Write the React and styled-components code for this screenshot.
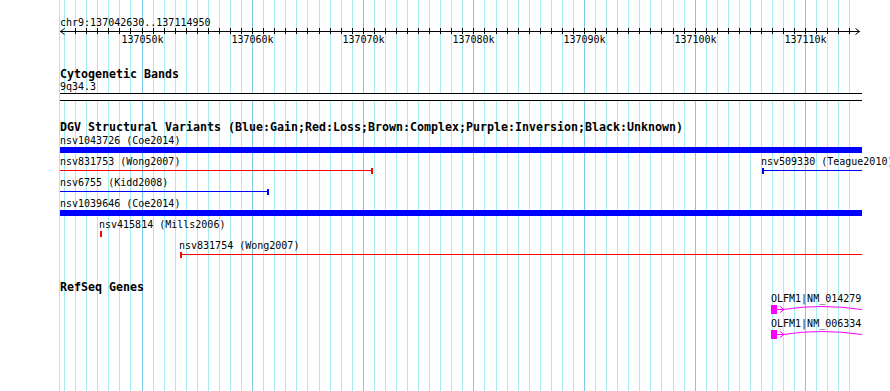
import React from 'react';
import styled, { createGlobalStyle } from 'styled-components';

// region shown in the browser panel
const START = 137042630;
const END = 137114950;
const LEFT = 60;
const SPAN = 800;
const toX = bp => LEFT + ((bp - START) * SPAN) / (END - START);

const BLUE = '#0000ff';
const RED = '#ff0000';
const MAGENTA = '#ff00ff';

const GlobalStyle = createGlobalStyle`
    html, body {
        margin: 0;
        padding: 0;
        background: #ffffff;
    }
    body {
        font-family: "DejaVu Sans Mono", "Liberation Mono", monospace;
        color: #000;
    }
`;

const Panel = styled.div`
    position: relative;
    width: 890px;
    height: 391px;
    overflow: hidden;
    background: #ffffff;
`;

const GridLayer = styled.svg`
    position: absolute;
    left: 0;
    top: 0;
    display: block;
`;

const Tracks = styled.div`
    position: relative;
    display: flex;
    flex-direction: column;
`;

const CoordLine = styled.div`
    margin-top: 17px;
    height: 11px;
    padding-left: ${LEFT}px;
    font-size: 10px;
    line-height: 12px;
    white-space: nowrap;
`;

const RulerSvg = styled.svg`
    display: block;
`;

const RulerLabels = styled.div`
    position: relative;
    margin-top: -2px;
    height: 12px;
`;

const RulerLabel = styled.span`
    position: absolute;
    top: 0;
    transform: translateX(-50%);
    font-size: 10px;
    line-height: 12px;
    white-space: nowrap;
`;

const TrackTitle = styled.div`
    margin-top: ${p => p.$gap}px;
    height: ${p => p.$h}px;
    padding-left: ${LEFT}px;
    font-size: 11.63px;
    font-weight: bold;
    line-height: 13px;
    white-space: nowrap;
`;

const SubLabel = styled.div`
    height: 12px;
    padding-left: ${LEFT}px;
    font-size: 10px;
    line-height: 12px;
`;

const BandBox = styled.div`
    margin-left: ${LEFT}px;
    width: 802px;
    height: 8px;
    box-sizing: border-box;
    border-top: 1px solid #000;
    border-bottom: 1px solid #000;
    background: #fff;
`;

const FeatureRow = styled.div`
    position: relative;
    height: ${p => p.$h}px;
`;

const FeatureLabel = styled.span`
    position: absolute;
    top: 0;
    font-size: 10px;
    line-height: 12px;
    white-space: nowrap;
`;

const Bar = styled.div`
    position: absolute;
    top: 12px;
    height: 6px;
    background: ${p => p.$color};
`;

const Span = styled.div`
    position: absolute;
    top: 14px;
    height: 1px;
    background: ${p => p.$color};
`;

const Tick = styled.div`
    position: absolute;
    top: 12px;
    width: 2px;
    height: 6px;
    background: ${p => p.$color};
`;

const GeneSvg = styled.svg`
    position: absolute;
    top: 12px;
    display: block;
    overflow: visible;
`;

const gridLines = [{ x: 59, major: false }];
for (let k = 137043; k <= 137114; k++) {
    gridLines.push({ x: Math.round(toX(k * 1000)), major: k % 10 === 0 });
}

const rulerLabels = [];
for (let k = 137050; k <= 137110; k += 10) {
    rulerLabels.push({ x: Math.round(toX(k * 1000)), text: `${k}k` });
}

const variantRows = [
    [{ label: 'nsv1043726 (Coe2014)', at: 60, kind: 'bar', from: 60, to: 862, color: BLUE }],
    [
        { label: 'nsv831753 (Wong2007)', at: 60, kind: 'line', from: 60, to: 373, tick: 371, color: RED },
        { label: 'nsv509330 (Teague2010)', at: 761, kind: 'line', from: 762, to: 862, tick: 762, color: BLUE },
    ],
    [{ label: 'nsv6755 (Kidd2008)', at: 60, kind: 'line', from: 60, to: 269, tick: 267, color: BLUE }],
    [{ label: 'nsv1039646 (Coe2014)', at: 60, kind: 'bar', from: 60, to: 862, color: BLUE }],
    [{ label: 'nsv415814 (Mills2006)', at: 99, kind: 'point', tick: 100, color: RED }],
    [{ label: 'nsv831754 (Wong2007)', at: 179, kind: 'line', from: 180, to: 862, tick: 180, color: RED }],
];

const genes = ['OLFM1|NM_014279', 'OLFM1|NM_006334'];

const Variant = ({ f }) => (
    <>
        <FeatureLabel style={{ left: f.at }}>{f.label}</FeatureLabel>
        {f.kind === 'bar' && <Bar $color={f.color} style={{ left: f.from, width: f.to - f.from }} />}
        {f.kind === 'line' && <Span $color={f.color} style={{ left: f.from, width: f.to - f.from }} />}
        {f.tick !== undefined && <Tick $color={f.color} style={{ left: f.tick }} />}
    </>
);

const GeneGlyph = () => (
    <GeneSvg width="91" height="9" style={{ left: 771 }}>
        <rect x="0" y="0" width="6" height="9" fill={MAGENTA} />
        <path d="M6 4.5 L12 4.5 Q50 -1.5 91 4.5" fill="none" stroke={MAGENTA} strokeWidth="1" />
        <polyline points="9,1.5 13,4.5 9,7.5" fill="none" stroke={MAGENTA} strokeWidth="1" />
    </GeneSvg>
);

const App = () => {
    return (
        <>
            <GlobalStyle />
            <Panel>
                <GridLayer width="890" height="391">
                    {gridLines.map(g => (
                        <rect key={g.x} x={g.x} y="0" width="1" height="391" fill={g.major ? '#7ccaea' : '#a6ecf0'} />
                    ))}
                </GridLayer>
                <Tracks>
                    <CoordLine>chr9:137042630..137114950</CoordLine>
                    <RulerSvg width="890" height="8">
                        <line x1="60" y1="3.5" x2="860" y2="3.5" stroke="#000" shapeRendering="crispEdges" />
                        {gridLines.slice(2).map(g => (
                            <line key={g.x} x1={g.x + 0.5} y1="0" x2={g.x + 0.5} y2="6" stroke="#000" shapeRendering="crispEdges" />
                        ))}
                        <polyline points="64.5,0.5 60.5,3.5 64.5,6.5" fill="none" stroke="#000" />
                        <polyline points="855.5,0.5 859.5,3.5 855.5,6.5" fill="none" stroke="#000" />
                    </RulerSvg>
                    <RulerLabels>
                        {rulerLabels.map(l => (
                            <RulerLabel key={l.text} style={{ left: l.x + 0.5 }}>{l.text}</RulerLabel>
                        ))}
                    </RulerLabels>

                    <TrackTitle $gap={22} $h={13}>Cytogenetic Bands</TrackTitle>
                    <SubLabel>9q34.3</SubLabel>
                    <BandBox />

                    <TrackTitle $gap={20} $h={14}>
                        DGV Structural Variants (Blue:Gain;Red:Loss;Brown:Complex;Purple:Inversion;Black:Unknown)
                    </TrackTitle>
                    {variantRows.map((row, i) => (
                        <FeatureRow key={i} $h={21}>
                            {row.map(f => <Variant key={f.label} f={f} />)}
                        </FeatureRow>
                    ))}

                    <TrackTitle $gap={20} $h={12}>RefSeq Genes</TrackTitle>
                    {genes.map(g => (
                        <FeatureRow key={g} $h={25}>
                            <FeatureLabel style={{ left: 771 }}>{g}</FeatureLabel>
                            <GeneGlyph />
                        </FeatureRow>
                    ))}
                </Tracks>
            </Panel>
        </>
    );
};

export default App;
